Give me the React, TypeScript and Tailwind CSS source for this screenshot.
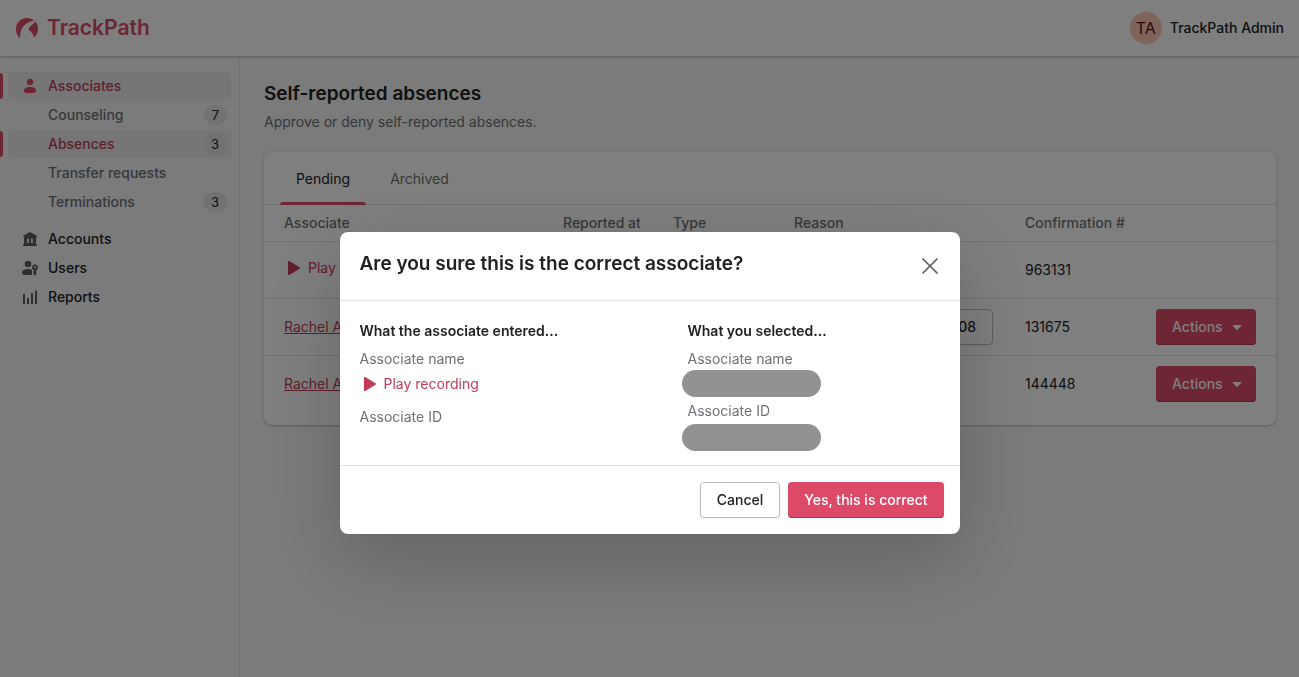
import type { ReactNode } from "react";

const rows = [
  { name: null, confirmation: "963131" },
  { name: "Rachel A.", confirmation: "131675", shift: "08" },
  { name: "Rachel A.", confirmation: "144448" },
];

const subItems = [
  { label: "Counseling", count: 7 },
  { label: "Absences", count: 3, active: true },
  { label: "Transfer requests" },
  { label: "Terminations", count: 3 },
];

function Logo() {
  return (
    <svg viewBox="0 0 23 21" className="w-[23px] h-[21px] mr-2" fill="#dc4a68" aria-hidden="true">
      <path d="M4 20C1.500 18 0 14.800 0 11 0 5 4.800 0 11 0c2.800 0 5.200.9 7.200 2.500C14 3.500 10.500 5 8 7.500 5 10.500 4 14.500 4 20z" />
      <path d="M19.500 3.500C21.200 5.500 22 8 22 11c0 3.500-1.300 6.300-3.800 8.500-1-3-2.700-5.500-5.400-8-.5-.5-.4-1 0-1.500z" />
    </svg>
  );
}

function PlayIcon() {
  return (
    <svg viewBox="0 0 20 20" className="w-5 h-5" fill="currentColor" aria-hidden="true">
      <path d="M4 3.800v12.400c0 .7.700 1 1.300.700l10.200-6.200c.6-.3.600-1 0-1.400L5.300 3.100C4.700 2.800 4 3.100 4 3.800z" />
    </svg>
  );
}

function NavIcon({ children, className }: { children: ReactNode; className: string }) {
  return (
    <svg viewBox="0 0 20 20" className={`w-5 h-5 mr-2 ${className}`} fill="currentColor" aria-hidden="true">
      {children}
    </svg>
  );
}

function Sidebar() {
  return (
    <nav className="w-60 shrink-0 border-r border-[#e1e3e5] pt-4 pr-2 text-sm leading-5 font-medium">
      <ul>
        <li className="relative flex pl-2 mb-px">
          <span className="absolute left-0 top-px bottom-px w-[3px] rounded-r bg-[#dc4a68]" />
          <a href="#associates" className="flex flex-1 items-center h-7 rounded pl-3 bg-[#ededee] text-[#c13b58]">
            <NavIcon className="text-[#dc4a68]">
              <circle cx="10" cy="6" r="3.200" />
              <path d="M4 14.500c0-2 2.200-3.500 6-3.500s6 1.500 6 3.500c0 1.500-1 2.500-2.500 2.500h-7C5 17 4 16 4 14.500z" />
            </NavIcon>
            Associates
          </a>
        </li>
        {subItems.map((item) => (
          <li key={item.label} className="relative flex pl-2 mb-px">
            {item.active && <span className="absolute left-0 top-px bottom-px w-[3px] rounded-r bg-[#dc4a68]" />}
            <a
              href="#section"
              className={`flex flex-1 items-center justify-between h-7 rounded pl-10 pr-1 ${
                item.active ? "bg-[#ededee] text-[#c13b58]" : "text-[#6d7175]"
              }`}
            >
              {item.label}
              {item.count && (
                <span className="h-5 px-2 rounded-full bg-[#e4e5e7] text-[13px] font-normal text-[#202223]">{item.count}</span>
              )}
            </a>
          </li>
        ))}
      </ul>
      <ul className="pt-2">
        <li className="flex pl-2 mb-px">
          <a href="#accounts" className="flex flex-1 items-center h-7 pl-3 text-[#202223]">
            <NavIcon className="text-[#5c5f62]">
              <path
                fillRule="evenodd"
                d="M10 3l6 3.200c.6.300.8.700.8 1.300 0 .6-.3 1-.8 1V15c.6 0 1 .4 1 1s-.4 1-1 1H4c-.6 0-1-.4-1-1s.4-1 1-1V8.500c-.5 0-.8-.4-.8-1 0-.6.200-1 .8-1.300zM7.200 9.500V14h1.800V9.500zm3.800 0V14h1.800V9.500z"
              />
            </NavIcon>
            Accounts
          </a>
        </li>
        <li className="flex pl-2 mb-px">
          <a href="#users" className="flex flex-1 items-center h-7 pl-3 text-[#202223]">
            <NavIcon className="text-[#5c5f62]">
              <circle cx="8" cy="6" r="3.300" />
              <path d="M2 14.500C2 12.300 4.500 11 8 11c1.600 0 3 .3 4 .8V17H4.500C3 17 2 16 2 14.500z" />
              <path
                fillRule="evenodd"
                d="M15 6.500a3 3 0 0 1 1.500 5.600V13l-.7.700.7.800-.7.900.7.800-1.500 1.300-1.500-1.300v-4.100A3 3 0 0 1 15 6.500zm0 1.700a1 1 0 1 0 0 2 1 1 0 0 0 0-2z"
              />
            </NavIcon>
            Users
          </a>
        </li>
        <li className="flex pl-2 mb-px">
          <a href="#reports" className="flex flex-1 items-center h-7 pl-3 text-[#202223]">
            <NavIcon className="text-[#5c5f62]">
              <path d="M3 7h2v10H3zM7 11h2v6H7zM11 6h2v11h-2zM15 3.500h2V17h-2z" />
            </NavIcon>
            Reports
          </a>
        </li>
      </ul>
    </nav>
  );
}

function AbsencesTable() {
  return (
    <table className="w-full table-fixed border-collapse text-left">
      <thead>
        <tr className="h-9 text-[#6d7175]">
          <th className="w-[279px] pl-5 font-medium">Associate</th>
          <th className="w-[110px] pl-5 font-medium">Reported at</th>
          <th className="w-[121px] pl-5 font-medium">Type</th>
          <th className="w-[231px] pl-5 font-medium">Reason</th>
          <th className="pl-5 font-medium">Confirmation #</th>
          <th className="w-[140px]" aria-label="Actions" />
        </tr>
      </thead>
      <tbody>
        {rows.map((row) => (
          <tr key={row.confirmation} className="h-[57px] border-t border-[#e1e3e5]">
            <td className="pl-5">
              {row.name ? (
                <a href="#associate" className="text-[#c13b58] underline">{row.name}</a>
              ) : (
                <button className="flex items-center gap-1 pb-1 text-[#c13b58]"><PlayIcon />Play</button>
              )}
            </td>
            <td />
            <td />
            <td className="pl-5">
              {row.shift && (
                <button className="h-9 w-[199px] rounded border border-[#babfc3] pr-4 text-right font-medium shadow-xs">
                  {row.shift}
                </button>
              )}
            </td>
            <td className="pl-5">{row.confirmation}</td>
            <td className="pl-5 pr-5">
              {row.name && (
                <button className="flex h-9 w-full items-center gap-2 rounded bg-[#dc4a68] pl-4 font-medium text-white shadow-[inset_0_-1px_0_#b23450]">
                  Actions
                  <svg viewBox="0 0 12 12" className="w-3 h-3" fill="currentColor" aria-hidden="true">
                    <path d="M2.300 4h7.400c.5 0 .7.600.400 1L6.500 8.700c-.3.300-.7.300-1 0L1.900 5c-.3-.4-.1-1 .4-1z" />
                  </svg>
                </button>
              )}
            </td>
          </tr>
        ))}
      </tbody>
    </table>
  );
}

function ConfirmDialog() {
  return (
    <div className="fixed inset-0 flex items-center justify-center bg-black/50 pt-[89px]">
      <div
        role="dialog"
        aria-modal="true"
        aria-labelledby="dialog-title"
        className="w-full max-w-[620px] rounded-lg bg-white shadow-[0_26px_80px_rgba(0,0,0,0.2),0_0_1px_rgba(0,0,0,0.2)]"
      >
        <div className="flex justify-between border-b border-[#e1e3e5] px-5 py-[18px]">
          <h2 id="dialog-title" className="text-[19px] leading-7 font-semibold">Are you sure this is the correct associate?</h2>
          <button aria-label="Close" className="flex h-8 w-5 items-center justify-center text-[#5c5f62]">
            <svg viewBox="0 0 20 20" className="w-5 h-5" fill="none" stroke="currentColor" strokeWidth="1.700" strokeLinecap="round" aria-hidden="true">
              <path d="M3 3l14 14M17 3L3 17" />
            </svg>
          </button>
        </div>

        <div className="grid grid-cols-[328px_1fr] px-5 pt-5 pb-3.5">
          <div>
            <h3 className="font-semibold">What the associate entered...</h3>
            <p className="mt-2 text-[#6d7175]">Associate name</p>
            <button className="mt-[5px] flex items-center gap-1 text-[#c13b58]"><PlayIcon />Play recording</button>
            <p className="mt-[13px] text-[#6d7175]">Associate ID</p>
          </div>
          <div>
            <h3 className="font-semibold">What you selected...</h3>
            <p className="mt-2 text-[#6d7175]">Associate name</p>
            <div className="mt-px -ml-1.5 h-[27px] w-[139px] rounded-full bg-[#929292]" />
            <p className="mt-1 text-[#6d7175]">Associate ID</p>
            <div className="mt-[3px] -ml-1.5 h-[27px] w-[139px] rounded-full bg-[#929292]" />
          </div>
        </div>

        <div className="flex justify-end gap-2 border-t border-[#e1e3e5] p-4">
          <button className="h-9 rounded border border-[#babfc3] px-4 font-medium shadow-xs">Cancel</button>
          <button className="h-9 rounded bg-[#dc4a68] px-4 font-medium text-white shadow-[inset_0_-1px_0_#b23450]">
            Yes, this is correct
          </button>
        </div>
      </div>
    </div>
  );
}

export default function App() {
  return (
    <div className="flex min-h-screen flex-col bg-[#f6f6f7] font-[Inter,sans-serif] text-sm leading-5 text-[#202223]">
      <header className="flex h-14 items-center justify-between bg-white pl-4 pr-[15px] shadow-[0_1px_2px_rgba(0,0,0,0.25)]">
        <a href="#home" className="flex items-center text-[21px] font-semibold text-[#dc4a68]">
          <Logo />
          TrackPath
        </a>
        <button className="flex items-center gap-2 font-medium">
          <span className="flex h-8 w-8 items-center justify-center rounded-full bg-[#ffc9b3] text-base font-normal text-[#570a25]">TA</span>
          TrackPath Admin
        </button>
      </header>

      <div className="flex flex-1">
        <Sidebar />
        <main className="min-w-0 flex-1 pl-6 pr-[23px] pt-6">
          <h1 className="text-[19px] leading-7 font-semibold">Self-reported absences</h1>
          <p className="mt-1 text-[#6d7175]">Approve or deny self-reported absences.</p>

          <section className="mt-5 rounded-lg bg-white pb-[13px] shadow-[0_0_4px_rgba(0,0,0,0.1),0_1px_2px_rgba(0,0,0,0.2)]">
            <div role="tablist" className="flex h-[53px] gap-2 border-b border-[#e1e3e5] px-4">
              <button role="tab" aria-selected="true" className="relative px-4 pt-0.5">
                Pending
                <span className="absolute inset-x-0 -bottom-px h-[3px] rounded-t bg-[#dc4a68]" />
              </button>
              <button role="tab" aria-selected="false" className="px-4 pt-0.5 text-[#6d7175]">Archived</button>
            </div>
            <AbsencesTable />
          </section>
        </main>
      </div>

      <ConfirmDialog />
    </div>
  );
}
